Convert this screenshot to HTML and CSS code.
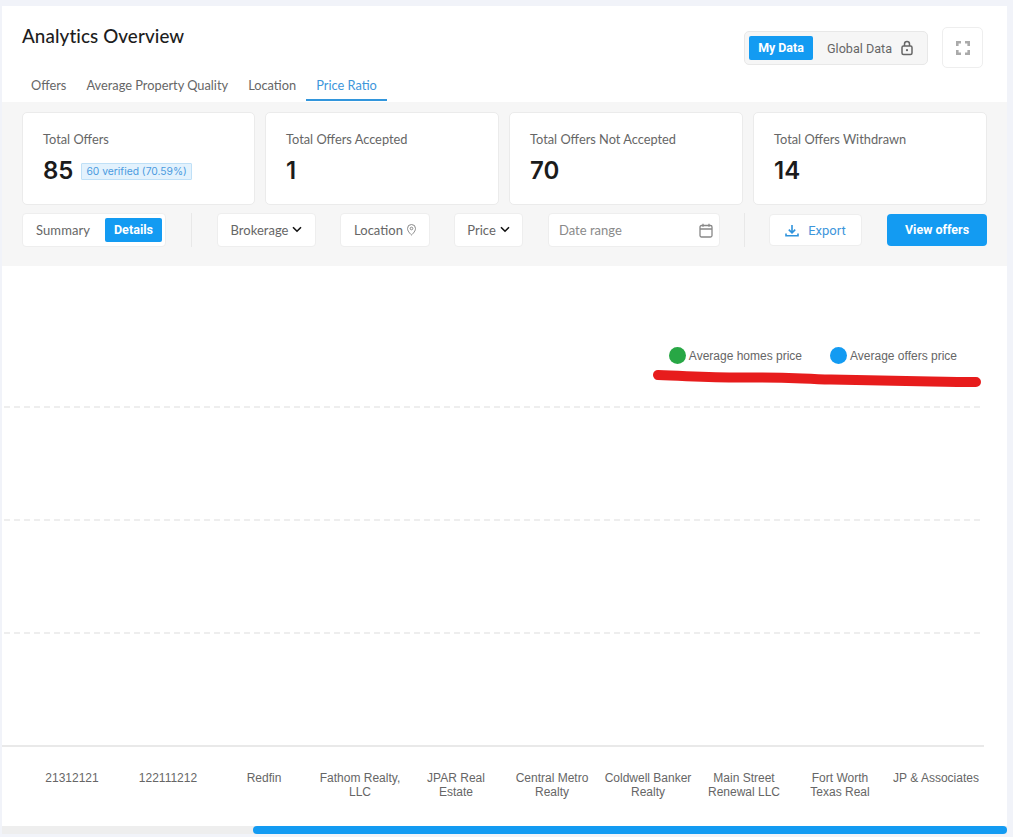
FILE: index.html
```html
<!DOCTYPE html>
<html lang="en">
<head>
<meta charset="utf-8">
<title>Analytics Overview</title>
<link rel="stylesheet" href="styles.css">
</head>
<body>
<main class="panel">
  <header class="head">
    <div class="head-left">
      <h1 class="title">Analytics Overview</h1>
      <nav class="tabs">
        <a class="tab">Offers</a>
        <a class="tab">Average Property Quality</a>
        <a class="tab">Location</a>
        <a class="tab tab-active">Price Ratio</a>
      </nav>
    </div>
    <div class="head-right">
      <div class="data-switch">
        <span class="data-on">My Data</span>
        <span class="data-off">Global Data
          <svg class="lock" width="14" height="16" viewBox="0 0 14 16" fill="none" stroke="#666" stroke-width="1.5"><rect x="2" y="6" width="10" height="8.5" rx="1.5"/><path d="M4.5 6V4a2.5 2.5 0 0 1 5 0v2"/><circle cx="7" cy="10.2" r="1.1" fill="#666" stroke="none"/></svg>
        </span>
      </div>
      <button class="expand" aria-label="Fullscreen">
        <svg width="14" height="14" viewBox="0 0 14 14" fill="none" stroke="#aaa" stroke-width="2.6"><path d="M1.300 5V1.300H5M9 1.300h3.700V5M12.700 9v3.700H9M5 12.700H1.300V9"/></svg>
      </button>
    </div>
  </header>

  <section class="band">
    <div class="stats">
      <div class="stat"><div class="stat-label">Total Offers</div><div class="stat-row"><span class="stat-num">85</span><span class="verified">60 verified (70.59%)</span></div></div>
      <div class="stat"><div class="stat-label">Total Offers Accepted</div><div class="stat-row"><span class="stat-num">1</span></div></div>
      <div class="stat"><div class="stat-label">Total Offers Not Accepted</div><div class="stat-row"><span class="stat-num">70</span></div></div>
      <div class="stat"><div class="stat-label">Total Offers Withdrawn</div><div class="stat-row"><span class="stat-num">14</span></div></div>
    </div>
    <div class="toolbar">
      <div class="box toggle"><span class="toggle-off">Summary</span><span class="toggle-on">Details</span></div>
      <span class="divider nudge"></span>
      <div class="box filter w-brokerage nudge">Brokerage
        <svg width="10" height="7" viewBox="0 0 10 7" fill="none" stroke="#111" stroke-width="1.6"><path d="M1 1.2l4 4 4-4"/></svg>
      </div>
      <div class="box filter w-location">Location
        <svg width="9" height="12" viewBox="0 0 9 12" fill="none" stroke="#888" stroke-width="1"><path d="M4.5 11S8.5 7.6 8.5 4.5a4 4 0 0 0-8 0C.5 7.6 4.5 11 4.5 11z"/><circle cx="4.5" cy="4.5" r="1.3"/></svg>
      </div>
      <div class="box filter w-price">Price
        <svg width="10" height="7" viewBox="0 0 10 7" fill="none" stroke="#111" stroke-width="1.6"><path d="M1 1.2l4 4 4-4"/></svg>
      </div>
      <div class="box date nudge"><span>Date range</span>
        <svg width="14" height="15" viewBox="0 0 14 15" fill="none" stroke="#888" stroke-width="1.3"><rect x="1" y="2.5" width="12" height="11.5" rx="1.5"/><path d="M1 6h12M4 .8v3M10 .8v3"/></svg>
      </div>
      <span class="divider"></span>
      <button class="box export">
        <svg width="14" height="13" viewBox="0 0 14 13" fill="none" stroke="#2f93dc" stroke-width="1.6"><path d="M7 1v7.5M3.8 5.6L7 8.8l3.2-3.2M1 9.500v2.300h12V9.500"/></svg>
        Export
      </button>
      <button class="view nudge">View offers</button>
    </div>
  </section>

  <section class="chart">
    <div class="legend">
      <span class="legend-item"><i class="dot dot-green"></i>Average homes price</span>
      <span class="legend-item"><i class="dot dot-blue"></i>Average offers price</span>
    </div>
    <div class="plot">
      <div class="gridline"></div>
      <div class="gridline"></div>
      <div class="gridline"></div>
    </div>
    <div class="axis"></div>
    <div class="labels">
      <span>21312121</span>
      <span>122111212</span>
      <span>Redfin</span>
      <span>Fathom Realty, LLC</span>
      <span>JPAR Real Estate</span>
      <span>Central Metro Realty</span>
      <span>Coldwell Banker Realty</span>
      <span>Main Street Renewal LLC</span>
      <span>Fort Worth Texas Real</span>
      <span>JP &amp; Associates</span>
    </div>
    <svg class="scribble" width="340" height="24" viewBox="0 0 340 24" fill="none"><path d="M7 6C40 7 60 9 100 8.500S150 10 180 10.500 250 12 280 12.500 315 13 325 13" stroke="#e71c1c" stroke-width="10" stroke-linecap="round"/></svg>
  </section>

  <div class="scrollbar"><div class="thumb"></div></div>
</main>
</body>
</html>
```
FILE: styles.css
```css
* { box-sizing: border-box; }
html, body { margin: 0; height: 100%; }
body {
  background: #f1f3f9;
  padding: 6px 6px 3px 2px;
  font-family: "Lato", "Liberation Sans", sans-serif;
  color: #666;
  overflow: hidden;
}
.panel { width: 1005px; height: 828px; display: flex; flex-direction: column; }

.head {
  height: 96px;
  background: #fff;
  display: flex;
  justify-content: space-between;
  padding: 18px 24px 0 20px;
}
.title {
  margin: 0;
  font-size: 18.8px;
  line-height: 24px;
  font-weight: 500;
  color: #1d1d1d;
  letter-spacing: .1px;
}
.tabs { display: flex; margin: 20px 0 0 -1px; }
.tab {
  font-size: 12.8px;
  line-height: 18px;
  padding: 8px 10px 5px;
  color: #666;
  border-bottom: 2px solid transparent;
}
.tab-active { color: #3d96db; border-bottom-color: #3296dc; }

.head-right { display: flex; align-items: flex-start; gap: 14px; padding-top: 3px; }
.data-switch {
  margin-top: 4px;
  width: 184px;
  height: 34px;
  background: #f6f6f6;
  border: 1px solid #e8e8e8;
  border-radius: 5px;
  display: flex;
  align-items: center;
  padding-left: 4px;
  font-family: "Roboto", sans-serif;
  font-size: 12.4px;
}
.data-on {
  width: 64px;
  height: 24px;
  line-height: 24px;
  background: #139bf2;
  color: #fff;
  font-weight: 700;
  text-align: center;
  border-radius: 2px;
}
.data-off {
  display: flex;
  align-items: center;
  gap: 8px;
  margin-left: 14px;
  font-size: 12.6px;
  color: #666;
}
.lock { margin-top: -1px; }
.expand {
  width: 41px;
  height: 41px;
  background: #fff;
  border: 1px solid #eeeeee;
  border-radius: 5px;
  padding: 0;
  display: flex;
  align-items: center;
  justify-content: center;
}

.band { height: 164px; background: #f6f6f6; padding: 10px 20px 0 20px; }
.stats { display: grid; grid-template-columns: 233px 234px 234px 234px; gap: 10px; }
.stat {
  height: 93px;
  background: #fff;
  border: 1px solid #ebebeb;
  border-radius: 5px;
  padding: 17px 20px 0;
}
.stat-label { font-size: 12.8px; line-height: 18px; color: #666; }
.stat-row { display: flex; align-items: center; gap: 8px; margin-top: 8px; }
.stat-num {
  font-family: "Inter", sans-serif;
  font-size: 24px;
  line-height: 30px;
  font-weight: 600;
  color: #1b1b1b;
}
.verified {
  font-family: "Inter", sans-serif;
  font-size: 10.300px;
  line-height: 15px;
  padding: 0 4px;
  color: #4b9be0;
  background: #e3f2fd;
  border: 1px solid #bfe0f7;
  border-radius: 1px;
}

.toolbar { display: flex; gap: 24px; align-items: center; margin-top: 8px; height: 34px; }
.nudge { margin-left: 1px; }
.box { background: #fff; border: 1px solid #eeeeee; border-radius: 4px; height: 34px; }
.divider { width: 1px; height: 34px; background: #e8e8e8; }
.toggle { width: 144px; display: flex; align-items: center; justify-content: space-between; padding: 0 3px 0 13px; font-size: 13px; }
.toggle-off { padding-bottom: 1px; letter-spacing: .1px; }
.toggle-on {
  width: 57px;
  height: 24px;
  line-height: 24px;
  text-align: center;
  background: #139bf2;
  color: #fff;
  font-weight: 700;
  border-radius: 2px;
  font-family: "Roboto", sans-serif;
  font-size: 12.600px;
}
.filter { display: flex; align-items: center; justify-content: center; gap: 4px; padding-bottom: 1px; font-size: 13px; color: #666; }
.w-brokerage { width: 99px; }
.w-location { width: 90px; }
.w-price { width: 69px; }
.date {
  width: 172px;
  display: flex;
  align-items: center;
  justify-content: space-between;
  padding: 0 6px 0 10px;
  font-size: 13px;
  color: #8a8a8a;
}
.export {
  width: 93px;
  height: 32px;
  display: flex;
  align-items: center;
  justify-content: center;
  gap: 9px;
  padding: 0;
  font-family: "Roboto", sans-serif;
  font-size: 13px;
  color: #3d96db;
}
.view {
  width: 100px;
  height: 32px;
  border: 0;
  border-radius: 4px;
  background: #139bf2;
  color: #fff;
  font-family: "Roboto", sans-serif;
  font-size: 12.500px;
  font-weight: 700;
  padding: 0 0 1px;
}

.chart { position: relative; height: 560px; background: #fff; font-family: "Liberation Sans", Arial, sans-serif; }
.legend { display: flex; justify-content: flex-end; gap: 28px; padding: 81px 50px 0 0; height: 140px; font-size: 12px; color: #666; }
.legend-item { display: flex; align-items: flex-start; gap: 3px; line-height: 18px; }
.dot { width: 17px; height: 17px; border-radius: 50%; display: block; }
.dot-green { background: #28a745; }
.dot-blue { background: #139bf2; }
.plot { width: 976px; margin-left: 2px; }
.gridline { height: 113px; border-top: 2px dashed #eeeeee; }
.axis { height: 2px; width: 982px; background: #e9e9e9; }
.labels {
  display: grid;
  grid-template-columns: repeat(10, 96px);
  padding: 24px 0 0 22px;
  font-size: 12px;
  line-height: 14px;
  text-align: center;
  color: #666;
}
.labels span { padding: 0 3px; }
.scribble { position: absolute; left: 649px; top: 103px; }

.scrollbar { height: 8px; background: #eeeeee; padding-left: 251px; flex: none; }
.thumb { height: 8px; background: #139bf2; border-radius: 4px; }
```
